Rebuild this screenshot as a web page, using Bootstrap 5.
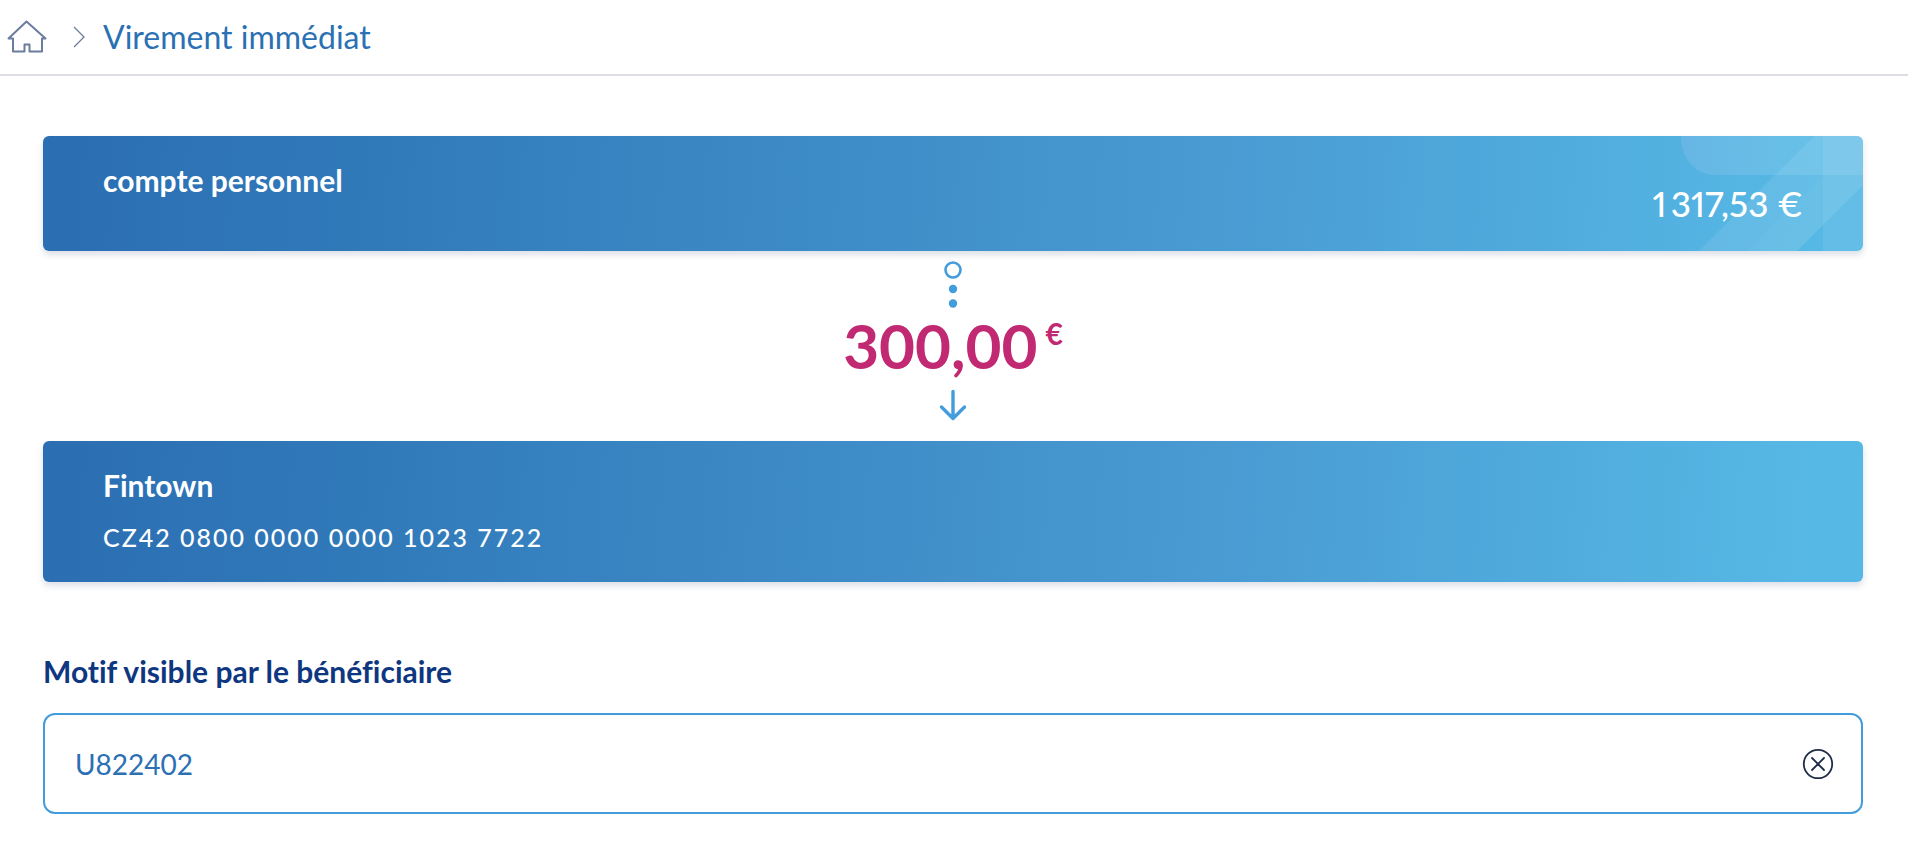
<!DOCTYPE html>
<html lang="fr">
<head>
<meta charset="utf-8">
<meta name="viewport" content="width=device-width, initial-scale=1">
<title>Virement immédiat</title>
<link href="https://cdn.jsdelivr.net/npm/bootstrap@5.3.0/dist/css/bootstrap.min.css" rel="stylesheet">
<style>
  body { font-family: Lato, "Open Sans", sans-serif; font-variant-ligatures: no-common-ligatures; color: #0e3780; }
  .topbar { height: 76px; padding: 0 7px; border-bottom: 2px solid #dcdee4; }
  .topbar svg { display: block; }
  .crumb-title { font-size: 32px; line-height: 40px; color: #2c70b4; }
  .page-main { padding: 60px 45px 32px 43px; }
  .account { position: relative; overflow: hidden; padding: 24px 60px; border-radius: 6px; color: #fff;
    background: linear-gradient(94deg, #2b6eb2 0%, #3079b9 17%, #4899d1 62%, #56b8e5 97%); }
  .account-wrap { border-radius: 6px; box-shadow: 0 4px 6px rgba(40, 60, 110, .16); }
  .account-from { min-height: 115px; }
  .account-to { min-height: 141px; }
  .account-art { position: absolute; top: 0; right: 0; }
  .account-name { font-size: 30px; line-height: 40px; font-weight: 700; margin: 0; }
  .account-sum { position: relative; font-size: 35px; line-height: 40px; font-weight: 500; font-variant-numeric: proportional-nums; margin-top: 23px; }
  .account-iban { font-size: 25px; line-height: 32px; font-weight: 500; letter-spacing: 2px; margin-top: 16px; }
  .transfer { height: 190px; padding-top: 10px; }
  .transfer-sum { font-size: 62px; line-height: 72px; font-weight: 700; color: #c12a72; }
  .transfer-sum span { font-size: 30px; line-height: 48px; }
  .reason-label { font-size: 30px; line-height: 40px; font-weight: 700; margin: 69px 0 22px; }
  .reason-box { height: 101px; padding: 0 27px 0 30px; border: 2px solid #439cdb; border-radius: 12px; }
  .reason-box input { font-size: 28px; line-height: 40px; color: #2c70b4; }
</style>
</head>
<body>
<nav class="topbar d-flex align-items-center" aria-label="Fil d'Ariane">
  <a href="#" aria-label="Accueil"><svg width="40" height="34" viewBox="0 0 40 34" fill="none" stroke="#6b7c9c" stroke-width="2" stroke-linejoin="round"><path d="M1.5 18.5 19.5 1.5 38.500 18.500H35V31.500H22.500V24.500H17.500V31.500H6V18.500Z"/></svg></a>
  <svg class="ms-4" width="16" height="24" viewBox="0 0 16 24" fill="none" stroke="#6b7c9c" stroke-width="1.300"><path d="M3 2 13 12 3 22"/></svg>
  <a href="#" class="crumb-title ms-3 text-decoration-none">Virement immédiat</a>
</nav>
<main class="page-main">
  <section class="account-wrap">
    <div class="account account-from d-flex justify-content-between align-items-start">
      <svg class="account-art" width="182" height="115" viewBox="0 0 182 115" fill="#fff">
        <defs><linearGradient id="bar-tint"><stop offset="0" stop-color="#9dc0ec" stop-opacity=".26"/><stop offset=".6" stop-color="#c8ecf8" stop-opacity=".15"/><stop offset="1" stop-color="#c8ecf8" stop-opacity=".15"/></linearGradient></defs>
        <path d="M0 0C0 22 14 39 34 39H182V0Z" fill="url(#bar-tint)"/>
        <path d="M18 115 133 0H182V49L116 115Z" fill-opacity=".09"/>
        <path d="M67 115 142 40V89L116 115Z" fill-opacity=".03"/>
        <path d="M142 0H182V115H142Z" fill-opacity=".08"/>
      </svg>
      <h2 class="account-name">compte personnel</h2>
      <div class="account-sum">1&#8201;317,53 €</div>
    </div>
  </section>
  <div class="transfer d-flex flex-column align-items-center">
    <svg width="18" height="48" viewBox="0 0 18 48" fill="#439cdb"><circle cx="9" cy="9" r="7.500" fill="none" stroke="#439cdb" stroke-width="2.600"/><circle cx="9" cy="28" r="4.200"/><circle cx="9" cy="42.500" r="4.200"/></svg>
    <div class="transfer-sum d-flex align-items-start gap-2">300,00<span>€</span></div>
    <svg class="mt-2" width="28" height="32" viewBox="0 0 28 32" fill="none" stroke="#439cdb" stroke-width="3.400" stroke-linecap="round" stroke-linejoin="round"><path d="M14 2.500V29.500M2.500 18 14 29.500 25.500 18"/></svg>
  </div>
  <section class="account-wrap">
    <div class="account account-to">
      <h2 class="account-name">Fintown</h2>
      <div class="account-iban">CZ42 0800 0000 0000 1023 7722</div>
    </div>
  </section>
  <label class="reason-label d-block" for="reason">Motif visible par le bénéficiaire</label>
  <div class="reason-box d-flex align-items-center">
    <input id="reason" type="text" class="flex-grow-1 border-0 p-0 bg-transparent" value="U822402">
    <button type="button" class="btn p-0 border-0" aria-label="Effacer"><svg class="d-block" width="32" height="32" viewBox="0 0 32 32" fill="none" stroke="#1f2e48" stroke-width="1.800" stroke-linecap="round"><circle cx="16" cy="16" r="14.200"/><path d="M10 10 22 22M22 10 10 22"/></svg></button>
  </div>
</main>
<script src="https://cdn.jsdelivr.net/npm/bootstrap@5.3.0/dist/js/bootstrap.bundle.min.js"></script>
</body>
</html>
